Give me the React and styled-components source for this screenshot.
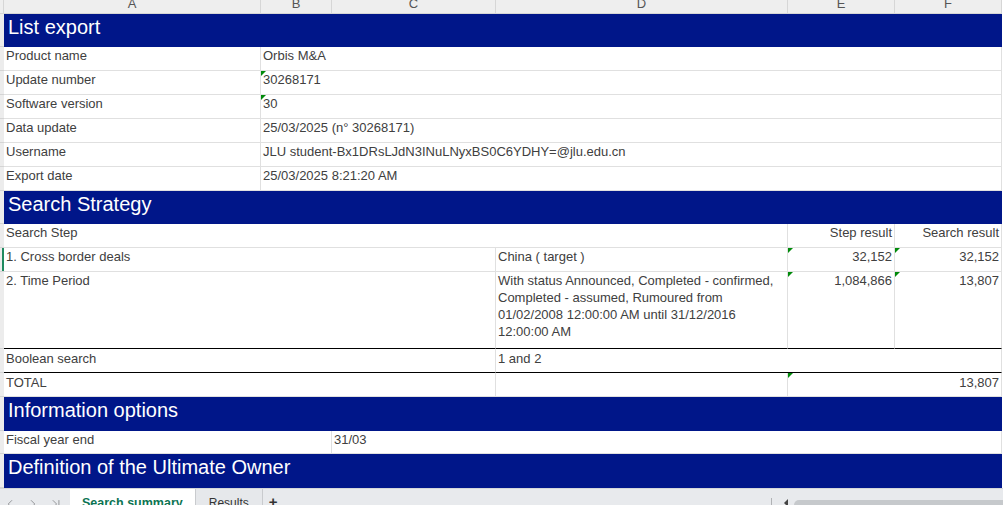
import styled, { createGlobalStyle, css } from 'styled-components';
import { ChevronLeft, ChevronRight, ChevronLast } from 'lucide-react';

const GlobalStyle = createGlobalStyle`
  html, body {
    margin: 0;
    padding: 0;
    background: #fff;
    overflow: hidden;
  }
  body {
    font-family: "Liberation Sans", Arial, sans-serif;
  }
`;

const COLS = '4px 257px 71px 164px 292px 107px 107px';
const NAVY = '#001689';
const GRID = '#e0e0e0';

const Page = styled.div`
  width: 1003px;
  height: 505px;
  display: flex;
  flex-direction: column;
  overflow: hidden;
  background: #fff;
`;

const Sheet = styled.div`
  flex: 1;
  overflow: hidden;
`;

const Row = styled.div`
  display: grid;
  grid-template-columns: ${COLS};
  height: ${(p) => p.$h || 24}px;
`;

const ColHead = styled.div`
  box-sizing: border-box;
  background: #eeeeee;
  border-right: 1px solid #d6d6d6;
  border-bottom: 1px solid #d6d6d6;
  overflow: hidden;
  text-align: center;
  font-size: 13px;
  line-height: 13px;
  color: #555;

  span {
    display: block;
    transform: translateY(-3px);
  }
`;

const Gutter = styled.div`
  box-sizing: border-box;
  background: #ececec;
  border-bottom: 1px solid #d4d4d4;
  ${(p) =>
    p.$active &&
    css`
      background: linear-gradient(to right, #ececec 2px, #1f8a5f 2px);
    `}
`;

const Cell = styled.div`
  grid-column: span ${(p) => p.$span || 1};
  position: relative;
  box-sizing: border-box;
  padding: ${(p) => (p.$low ? '1px' : '0')} 2px 0;
  font-size: 13px;
  line-height: 17px;
  color: #404040;
  white-space: nowrap;
  overflow: hidden;
  text-align: ${(p) => (p.$right ? 'right' : 'left')};
  border-right: 1px solid ${GRID};
  border-bottom: 1px solid ${(p) => (p.$rule ? '#000' : GRID)};

  ${(p) =>
    p.$flag &&
    css`
      &::before {
        content: '';
        position: absolute;
        top: 0;
        left: 0;
        border-top: 5px solid #008a0a;
        border-right: 5px solid transparent;
      }
    `}
`;

const SectionTitle = styled.div`
  grid-column: span 6;
  box-sizing: border-box;
  background: ${NAVY};
  color: #fff;
  font-size: 20px;
  line-height: 24px;
  padding: 1px 4px 0;
  white-space: nowrap;
`;

const TabBar = styled.div`
  height: 17px;
  flex: none;
  box-sizing: border-box;
  display: flex;
  align-items: stretch;
  background: #e8eaed;
  border-top: 1px solid #d4d6d9;
  overflow: hidden;
`;

const NavGroup = styled.div`
  width: 70px;
  display: flex;
  gap: 9px;
  padding: 8px 0 0 3px;
  box-sizing: border-box;
  color: #8f9195;
`;

const Tab = styled.div`
  padding: 8px ${(p) => (p.$active ? '12px' : '13px')} 0;
  font-size: ${(p) => (p.$active ? '12.5px' : '12px')};
  line-height: 12px;
  white-space: nowrap;
  background: ${(p) => (p.$active ? '#fff' : '#e6e8eb')};
  color: ${(p) => (p.$active ? '#0c7452' : '#333')};
  font-weight: ${(p) => (p.$active ? 700 : 400)};
  border-right: 1px solid #c9cbce;
`;

const AddTab = styled.div`
  padding: 7px 0 0 6px;
  font-size: 15px;
  font-weight: 700;
  line-height: 12px;
  color: #333;
`;

const ScrollArea = styled.div`
  margin-left: auto;
  width: 232px;
  display: flex;
  align-items: flex-start;
  padding-top: 9px;
  box-sizing: border-box;
`;

const Sep = styled.div`
  width: 1px;
  height: 10px;
  background: #b0b2b5;
`;

const Arrow = styled.div`
  margin: 1px 6px 0 12px;
  width: 0;
  height: 0;
  border-top: 4px solid transparent;
  border-bottom: 4px solid transparent;
  border-right: 4px solid #444;
`;

const Thumb = styled.div`
  flex: 1;
  height: 12px;
  margin-top: 2px;
  background: #c6c9cc;
  border-radius: 5px 0 0 5px;
`;

const letters = ['A', 'B', 'C', 'D', 'E', 'F'];

const info = [
  ['Product name', 'Orbis M&A', false],
  ['Update number', '30268171', true],
  ['Software version', '30', true],
  ['Data update', '25/03/2025 (n° 30268171)', false],
  ['Username', 'JLU student-Bx1DRsLJdN3INuLNyxBS0C6YDHY=@jlu.edu.cn', false],
  ['Export date', '25/03/2025 8:21:20 AM', false],
];

export default function App() {
  return (
    <Page>
      <GlobalStyle />
      <Sheet>
        <Row $h={14}>
          <ColHead />
          {letters.map((l) => (
            <ColHead key={l}>
              <span>{l}</span>
            </ColHead>
          ))}
        </Row>

        <Row $h={33}>
          <Gutter />
          <SectionTitle>List export</SectionTitle>
        </Row>
        {info.map(([label, value, flag]) => (
          <Row key={label}>
            <Gutter />
            <Cell>{label}</Cell>
            <Cell $span={5} $flag={flag}>
              {value}
            </Cell>
          </Row>
        ))}

        <Row $h={33}>
          <Gutter />
          <SectionTitle>Search Strategy</SectionTitle>
        </Row>
        <Row>
          <Gutter />
          <Cell $span={4}>Search Step</Cell>
          <Cell $right>Step result</Cell>
          <Cell $right>Search result</Cell>
        </Row>
        <Row>
          <Gutter $active />
          <Cell $span={3}>1. Cross border deals</Cell>
          <Cell>China ( target )</Cell>
          <Cell $right $flag>
            32,152
          </Cell>
          <Cell $right $flag>
            32,152
          </Cell>
        </Row>
        <Row $h={77}>
          <Gutter />
          <Cell $span={3} $rule>
            2. Time Period
          </Cell>
          <Cell $rule>
            With status Announced, Completed - confirmed,
            <br />
            Completed - assumed, Rumoured from
            <br />
            01/02/2008 12:00:00 AM until 31/12/2016
            <br />
            12:00:00 AM
          </Cell>
          <Cell $right $flag $rule>
            1,084,866
          </Cell>
          <Cell $right $flag $rule>
            13,807
          </Cell>
        </Row>
        <Row>
          <Gutter />
          <Cell $span={3} $rule $low>
            Boolean search
          </Cell>
          <Cell $span={3} $rule $low>
            1 and 2
          </Cell>
        </Row>
        <Row>
          <Gutter />
          <Cell $span={3} $low>
            TOTAL
          </Cell>
          <Cell />
          <Cell $span={2} $right $flag $low>
            13,807
          </Cell>
        </Row>

        <Row $h={34}>
          <Gutter />
          <SectionTitle>Information options</SectionTitle>
        </Row>
        <Row $h={23}>
          <Gutter />
          <Cell $span={2}>Fiscal year end</Cell>
          <Cell $span={4}>31/03</Cell>
        </Row>
        <Row $h={34}>
          <Gutter />
          <SectionTitle>Definition of the Ultimate Owner</SectionTitle>
        </Row>
      </Sheet>

      <TabBar>
        <NavGroup>
          <ChevronLeft size={14} strokeWidth={1.6} />
          <ChevronRight size={14} strokeWidth={1.6} />
          <ChevronLast size={14} strokeWidth={1.6} />
        </NavGroup>
        <Tab $active>Search summary</Tab>
        <Tab>Results</Tab>
        <AddTab>+</AddTab>
        <ScrollArea>
          <Sep />
          <Arrow />
          <Thumb />
        </ScrollArea>
      </TabBar>
    </Page>
  );
}
